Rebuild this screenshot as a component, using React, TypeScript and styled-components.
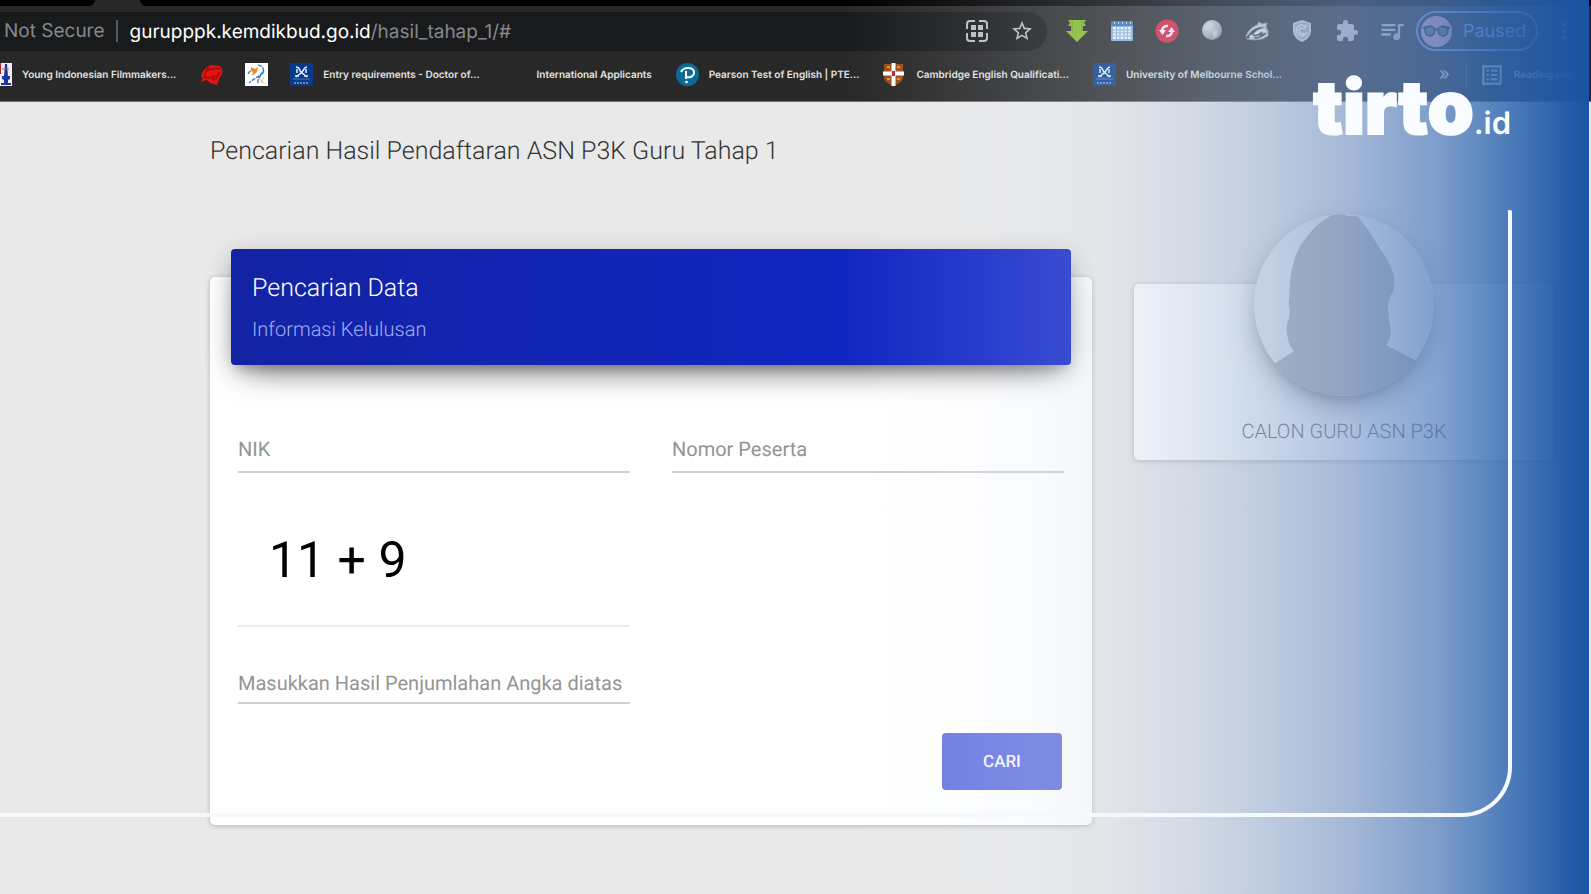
import React from "react";
import styled, { createGlobalStyle, css } from "styled-components";
import {
  MdExtension,
  MdMoreVert,
  MdOutlineListAlt,
  MdQueueMusic,
  MdStarBorder,
} from "react-icons/md";

const GlobalStyle = createGlobalStyle`
  *, *::before, *::after { box-sizing: border-box; }
  body {
    margin: 0;
    background: #e9e9e9;
    font-family: Roboto, "Liberation Sans", sans-serif;
    text-rendering: geometricPrecision;
  }
  button, input { font: inherit; text-rendering: inherit; }
  svg { flex: none; }
`;

const plainButton = css`
  display: flex;
  align-items: center;
  justify-content: center;
  padding: 0;
  border: 0;
  background: none;
  color: inherit;
  cursor: pointer;
`;

const Screen = styled.div`
  position: relative;
  min-height: 100vh;
  overflow: hidden;
`;

/* ---------- browser chrome ---------- */

const Chrome = styled.header`
  background: #282828;
  border-bottom: 1px solid #6f6f6f;
  font-family: Inter, "Liberation Sans", sans-serif;
`;

const TabStrip = styled.div`
  display: flex;
  height: 6px;
  background: #282828;
`;

const TabShade = styled.div<{ $grow?: boolean }>`
  flex: ${(p) => (p.$grow ? "1" : "0 0 95px")};
  margin-left: ${(p) => (p.$grow ? "45px" : "0")};
  background: #000;
  border-radius: ${(p) => (p.$grow ? "0 0 0 6px" : "0 0 6px 0")};
`;

const Toolbar = styled.div`
  display: flex;
  align-items: center;
  height: 50px;
  padding: 0 15px 0 0;
`;

const Omnibox = styled.div`
  flex: 1;
  display: flex;
  align-items: center;
  height: 39px;
  padding: 0 13px 0 4px;
  background: #191a1c;
  border-radius: 0 20px 20px 0;
  color: #86898c;
  font-size: 19px;
`;

const Security = styled.button`
  ${plainButton}
  padding-right: 11px;
  border-right: 2px solid #55585b;
  line-height: 22px;
`;

const Address = styled.div`
  flex: 1;
  padding-left: 12px;
  white-space: nowrap;
`;

const Host = styled.span`
  color: #fff;
`;

const OmniActions = styled.div`
  display: flex;
  gap: 21px;
  color: #b9bbbd;
`;

const Extensions = styled.div`
  display: flex;
  gap: 21px;
  margin: 0 12px 0 18px;
  color: #c9cbce;
`;

const IconButton = styled.button`
  ${plainButton}
  width: 24px;
  height: 24px;
`;

const Profile = styled.button`
  ${plainButton}
  justify-content: flex-start;
  gap: 11px;
  width: 122px;
  height: 40px;
  margin-right: 14px;
  padding-left: 3px;
  border: 2px solid #6f9be6;
  border-radius: 20px;
  color: #8fb2f0;
  font-size: 18px;
`;

const Bookmarks = styled.nav`
  display: flex;
  align-items: center;
  gap: 22px;
  height: 45px;
  padding-bottom: 8px;
  overflow: hidden;
  color: #e4e4e4;
  font-size: 10px;
  font-weight: 600;
`;

const Bookmark = styled.a<{ $cut?: boolean }>`
  display: flex;
  align-items: center;
  flex: none;
  gap: 10px;
  margin-left: ${(p) => (p.$cut ? "-11px" : "0")};
  color: inherit;
  text-decoration: none;
  white-space: nowrap;
`;

const BookmarkLabel = styled.span`
  padding-right: 2px;
`;

const IconSlot = styled.span`
  display: flex;
  width: 23px;
  height: 23px;
`;

const BookmarkEnd = styled.div`
  display: flex;
  align-items: center;
  gap: 16px;
  margin-left: auto;
  padding-right: 18px;
`;

const More = styled.button`
  ${plainButton}
  font-size: 18px;
  font-weight: 500;
  line-height: 20px;
`;

const ReadingList = styled.button`
  ${plainButton}
  gap: 9px;
  padding-left: 12px;
  border-left: 1px solid #5a6f93;
  height: 24px;
`;

/* ---------- page ---------- */

const Main = styled.main`
  padding: 34px 37px 68px 210px;
`;

const PageTitle = styled.h1`
  margin: 0 0 109px;
  color: #333;
  font-size: 25px;
  font-weight: 300;
  line-height: 32px;
`;

const Columns = styled.div`
  display: grid;
  grid-template-columns: 21fr 10fr;
  gap: 42px;
  align-items: start;
`;

const Card = styled.section`
  background: #fff;
  border-radius: 5px;
  box-shadow: 0 1px 5px rgba(0, 0, 0, 0.24);
`;

const CardHeader = styled.header`
  position: relative;
  top: -28px;
  margin: 0 21px -28px;
  padding: 24px 21px;
  border-radius: 4px;
  background: linear-gradient(90deg, #1323a4, #1127cc);
  box-shadow: 0 16px 34px -14px rgba(0, 0, 0, 0.56), 0 5px 26px rgba(0, 0, 0, 0.16),
    0 8px 12px -5px rgba(0, 0, 0, 0.22);
  color: #fff;
`;

const CardTitle = styled.h2`
  margin: 0 0 12px;
  font-size: 25px;
  font-weight: 300;
  line-height: 32px;
`;

const CardSubtitle = styled.p`
  margin: 0;
  color: #a3adf5;
  font-size: 20px;
  font-weight: 300;
  line-height: 24px;
`;

const Form = styled.form`
  display: grid;
  grid-template-columns: 1fr 1fr;
  column-gap: 42px;
  padding: 72px 28px 35px;
`;

const Field = styled.div<{ $compact?: boolean }>`
  display: grid;
  grid-column: ${(p) => (p.$compact ? "1" : "auto")};
  height: ${(p) => (p.$compact ? "33px" : "36px")};
`;

const FieldLabel = styled.label`
  grid-area: 1 / 1;
  color: #949494;
  font-size: 20px;
  line-height: 24px;
  white-space: nowrap;
`;

const FieldInput = styled.input`
  grid-area: 1 / 1;
  width: 100%;
  padding: 0;
  border: 0;
  border-bottom: 2px solid #d0d0d0;
  outline: 0;
  background: transparent;
  color: #333;
  font-size: 20px;
`;

const Sum = styled.output`
  grid-column: 1;
  margin: 58px 0 44px;
  padding: 0 0 34px 31px;
  border-bottom: 2px solid #eee;
  color: #000;
  font-size: 50px;
  line-height: 60px;
`;

const Actions = styled.div`
  grid-column: 1 / -1;
  display: flex;
  justify-content: flex-end;
  padding: 29px 2px 0;
`;

const SubmitButton = styled.button`
  width: 120px;
  height: 57px;
  border: 0;
  border-radius: 4px;
  background: #6b78e0;
  color: #f4f5ff;
  font-size: 17px;
  font-weight: 500;
  cursor: pointer;
`;

const ProfileCard = styled(Card)`
  display: flex;
  flex-direction: column;
  align-items: center;
  margin-top: 7px;
  padding-bottom: 16px;
`;

const Avatar = styled.div`
  width: 180px;
  height: 182px;
  margin: -70px 0 22px;
  border-radius: 50%;
  overflow: hidden;
  background: #f2f2f2;
  box-shadow: 0 16px 34px -12px rgba(0, 0, 0, 0.5), 0 4px 25px rgba(0, 0, 0, 0.12),
    0 8px 10px -5px rgba(0, 0, 0, 0.16);
`;

const ProfileName = styled.p`
  margin: 0;
  color: #666;
  font-size: 20px;
  font-weight: 300;
  line-height: 26px;
`;

/* ---------- branding laid over the page ---------- */

const BlueFade = styled.div`
  position: absolute;
  inset: 0 2px 0 0;
  pointer-events: none;
  background: linear-gradient(
    90deg,
    rgba(240, 246, 252, 0) 53%,
    rgba(236, 242, 250, 0.07) 59%,
    rgba(222, 230, 242, 0.16) 65%,
    rgba(200, 213, 232, 0.26) 70.5%,
    rgba(170, 191, 221, 0.37) 75%,
    rgba(143, 171, 212, 0.49) 80%,
    rgba(120, 152, 205, 0.61) 85%,
    rgba(84, 128, 191, 0.72) 90.5%,
    rgba(50, 106, 179, 0.83) 94.5%,
    rgba(34, 90, 167, 0.94) 98%,
    rgb(24, 84, 163) 100%
  );
`;

const FrameLine = styled.div`
  position: absolute;
  inset: 210px 79px 77px 0;
  pointer-events: none;
  border: solid #f5f9fd;
  border-width: 0 4px 4px 0;
  border-radius: 0 2px 50px 0;
`;

const Brand = styled.a`
  position: absolute;
  top: 82px;
  right: 80px;
  display: flex;
  align-items: baseline;
  color: #fafdff;
  font-family: Inter, Roboto, sans-serif;
  font-size: 74px;
  font-weight: 900;
  line-height: 50px;
  text-decoration: none;
  -webkit-text-stroke: 2px #fafdff;
`;

const BrandSuffix = styled.span`
  font-size: 31px;
  font-weight: 600;
  -webkit-text-stroke-width: 0;
`;

/* ---------- drawings ---------- */

const QrIcon = () => (
  <svg width="22" height="22" viewBox="0 0 22 22" fill="none" stroke="currentColor" strokeWidth="2">
    <path d="M1 9V4a3 3 0 0 1 3-3h5M13 1h5a3 3 0 0 1 3 3v5M21 13v5a3 3 0 0 1-3 3h-5M9 21H4a3 3 0 0 1-3-3v-5" />
    <path d="M5 5h5v5H5zM12 5h5v5h-5zM5 12h5v5H5zM12 12h5v5h-5z" fill="currentColor" stroke="none" />
  </svg>
);

const DownloadIcon = () => (
  <svg width="24" height="24" viewBox="0 0 24 24">
    <path d="M3 1h18l-2 3 2 3h-3v5h5L12 23 1 12h5V7H3l2-3z" fill="#84bd25" />
    <path d="M7 2v10M17 2v10" stroke="#5f9415" strokeWidth="1" />
  </svg>
);

const CalendarIcon = () => (
  <svg width="24" height="24" viewBox="0 0 24 24">
    <rect x="1" y="2" width="22" height="20" rx="1" fill="#7fb0e2" />
    <path d="M1 2h22v5H1z" fill="#2f73b8" />
    <path d="M4 4h1M8 4h1M12 4h1M16 4h1M20 4h1" stroke="#cfe3f7" strokeWidth="2" />
    <path d="M3 8h18v12H3z" fill="#eef5fc" />
    <path d="M3 11h18M3 14h18M3 17h18M6.500 8v12M10 8v12M14 8v12M17.500 8v12" stroke="#7fb0e2" />
  </svg>
);

const SyncIcon = () => (
  <svg width="24" height="24" viewBox="0 0 24 24">
    <circle cx="12" cy="12" r="11.500" fill="#e31a35" />
    <g fill="none" stroke="#fff" strokeWidth="2.500">
      <path d="M7 12a5 5 0 0 1 6-5" />
      <path d="M17 12a5 5 0 0 1-6 5" />
    </g>
    <path d="M4 11h7l-3.500 5zM20 13h-7l3.500-5z" fill="#fff" />
  </svg>
);

const GlobeIcon = () => (
  <svg width="24" height="24" viewBox="0 0 24 24">
    <defs>
      <radialGradient id="orb" cx="0.35" cy="0.3" r="0.8">
        <stop offset="0" stopColor="#eee" />
        <stop offset="1" stopColor="#898989" />
      </radialGradient>
    </defs>
    <circle cx="12" cy="11" r="10" fill="url(#orb)" />
    <path d="M5 6l5-3 4 2-4 4-3 3-3-2zM13 11l5 1-1 5-4 2z" fill="#dedede" opacity="0.7" />
  </svg>
);

const BadgerIcon = () => (
  <svg width="24" height="24" viewBox="0 0 24 24">
    <path d="M1 17C3 12 7 8 12 6l2-3 3 2 5-1-1 4 2 4v5l-6 3-8 1-7-1z" fill="#dcdcdc" stroke="#a39080" />
    <path d="M3 17c2-5 7-8 13-9l4 1c-6 0-10 3-13 8z" fill="#2c2c2c" />
    <path d="M5 17c3-1 5-1 7-3s5-3 8-2" stroke="#fff" strokeWidth="1.500" fill="none" />
    <path d="M9 19c5 0 8-1 12-5M8 16c3 1 7 0 9-3M15 16l4-1" stroke="#333" strokeWidth="1.500" fill="none" />
    <circle cx="3" cy="18" r="1.500" fill="#222" />
  </svg>
);

const ShieldIcon = () => (
  <svg width="24" height="24" viewBox="0 0 24 24">
    <path d="M12 1l9 3v8c0 6-5 9-9 11-4-2-9-5-9-11V4z" fill="#d8d8d8" />
    <path d="M12 3l7 2v7c0 4-4 7-7 9-3-2-7-5-7-9V5z" fill="#a9adb3" />
    <path d="M16 8a5.500 5.500 0 1 0 1 5M14 10a3 3 0 1 0 0 4M17 6l-3 4" fill="none" stroke="#f2f2f2" strokeWidth="1.500" />
  </svg>
);

const GlassesAvatar = () => (
  <svg width="31" height="31" viewBox="0 0 31 31">
    <circle cx="15.500" cy="15.500" r="15.500" fill="#e3a5cf" />
    <g stroke="#222" strokeWidth="1.500">
      <circle cx="9" cy="15" r="5" fill="#6e6e7c" />
      <circle cx="22" cy="15" r="5" fill="#6e6e7c" />
      <path d="M14 14q1.500-2 3 0M4 13l-2-2M27 13l2-2M3 11h6M22 11h6" fill="none" />
    </g>
  </svg>
);

const MonumentIcon = () => (
  <svg width="23" height="23" viewBox="0 0 23 23">
    <path d="M0 0h23v23H0z" fill="#fff" />
    <path d="M0 0h13v11H0z" fill="#b3272d" />
    <path d="M12 0h11v23H12z" fill="#f1edf2" />
    <path d="M16 1h2l1 12h2v3l-2 1v3h3v2H12v-2h3v-3l-2-1v-3h2z" fill="#1d35a6" />
    <path d="M13 6h7" stroke="#c7564f" />
  </svg>
);

const RedBirdIcon = () => (
  <svg width="23" height="23" viewBox="0 0 23 23">
    <path d="M1 14C2 8 6 3 12 2l8 1c2 2 3 5 2 8l-3 5-2 6-7-2-3-3-6 2 2-4z" fill="#e31313" />
    <path d="M6 8c4-2 9-3 14-2M3 14c4 1 8 1 12-1M12 17l4-2 4-6M9 4c-3 3-4 6-4 9" stroke="#9a0b0b" strokeWidth="1.500" fill="none" />
  </svg>
);

const StarMapIcon = () => (
  <svg width="23" height="23" viewBox="0 0 23 23">
    <path d="M0 0h23v23H0z" fill="#fff" />
    <path d="M6 4l4 2 3-2-1 5-5 4 1-4-2-1z" fill="#ef8a18" />
    <path d="M13 2c5 1 7 5 4 8-3 4-9 6-13 10M3 11c1-2 2-3 3-3M19 8c-3 5-7 7-6 12" stroke="#477fc6" strokeWidth="1.500" fill="none" strokeDasharray="4 1" />
    <path d="M13 15l7 6M16 20l3-6" stroke="#efbd73" />
  </svg>
);

const CrestIcon = () => (
  <svg width="23" height="23" viewBox="0 0 23 23">
    <path d="M0 0h23v23H0z" fill="#08398a" />
    <path d="M6 4c4 0 3 3 5 5s4 3 6 5M17 4c-3 0-3 3-5 5s-4 3-6 5M7 6v4M16 6v4M5 13h4M14 13h4" stroke="#e8f0ff" strokeWidth="1.500" fill="none" />
    <path d="M3 16h17" stroke="#4d75bb" />
    <path d="M4 20h15" stroke="#c9d8f2" strokeDasharray="2 1" />
  </svg>
);

const PearsonIcon = () => (
  <svg width="23" height="23" viewBox="0 0 23 23">
    <circle cx="11.500" cy="11.500" r="11.500" fill="#0a6b99" />
    <path d="M5 9c3-6 14-5 13 1 0 3-4 5-7 4M10 8v8" stroke="#fff" strokeWidth="2" fill="none" />
    <circle cx="10.500" cy="19" r="1.300" fill="#fff" />
  </svg>
);

const ShieldCrossIcon = () => (
  <svg width="21" height="23" viewBox="0 0 21 23">
    <path d="M1 1h19v13c0 5-5 7-9.500 9C6 21 1 19 1 14z" fill="#9c4a17" />
    <path d="M4 4h3M14 4h3M4 16h3M14 16h3" stroke="#d5962b" strokeWidth="2" />
    <path d="M10.500 0v23M0 10.500h21" stroke="#fff" strokeWidth="4" />
    <path d="M10.500 8v5" stroke="#b12424" strokeWidth="3" />
  </svg>
);

const Silhouette = () => (
  <svg width="180" height="182" viewBox="0 0 180 182">
    <path
      fill="#b2b2b2"
      d="M76 2Q86-2 94 2Q102 1 106 5Q116 17 123 30L133 45Q138 54 140 63Q141 71 139 78Q134 85 134 93Q134 105 137 117Q136 126 132 131L163 147V182H14V153L20 150L40 137Q35 132 34 125Q32 117 33 110Q36 103 36 95Q34 91 35 87L36 67Q37 56 40 47Q44 33 51 25Q61 11 76 2Z"
    />
  </svg>
);

const extensions = [
  { name: "Download", icon: <DownloadIcon /> },
  { name: "Calendar", icon: <CalendarIcon /> },
  { name: "Sync", icon: <SyncIcon /> },
  { name: "Globe", icon: <GlobeIcon /> },
  { name: "Badger", icon: <BadgerIcon /> },
  { name: "Shield", icon: <ShieldIcon /> },
  { name: "Extensions", icon: <MdExtension size={24} /> },
  { name: "Media", icon: <MdQueueMusic size={28} /> },
];

const bookmarks = [
  { id: "film", label: "Young Indonesian Filmmakers...", icon: <MonumentIcon />, cut: true },
  { id: "bird", label: "", icon: <RedBirdIcon /> },
  { id: "map", label: "", icon: <StarMapIcon /> },
  { id: "doctor", label: "Entry requirements - Doctor of...", icon: <CrestIcon /> },
  { id: "intl", label: "International Applicants", icon: null },
  { id: "pte", label: "Pearson Test of English | PTE...", icon: <PearsonIcon /> },
  { id: "camb", label: "Cambridge English Qualificati...", icon: <ShieldCrossIcon /> },
  { id: "melb", label: "University of Melbourne Schol...", icon: <CrestIcon /> },
];

export default function App() {
  return (
    <Screen>
      <GlobalStyle />
      <Chrome>
        <TabStrip>
          <TabShade />
          <TabShade $grow />
        </TabStrip>
        <Toolbar>
          <Omnibox>
            <Security type="button">Not Secure</Security>
            <Address>
              <Host>gurupppk.kemdikbud.go.id</Host>/hasil_tahap_1/#
            </Address>
            <OmniActions>
              <IconButton type="button" aria-label="QR code"><QrIcon /></IconButton>
              <IconButton type="button" aria-label="Bookmark"><MdStarBorder size={24} /></IconButton>
            </OmniActions>
          </Omnibox>
          <Extensions>
            {extensions.map((e) => (
              <IconButton type="button" key={e.name} aria-label={e.name}>{e.icon}</IconButton>
            ))}
          </Extensions>
          <Profile type="button"><GlassesAvatar />Paused</Profile>
          <IconButton type="button" aria-label="Menu"><MdMoreVert size={26} color="#c9cbce" /></IconButton>
        </Toolbar>
        <Bookmarks>
          {bookmarks.map((b) => (
            <Bookmark href="#" key={b.id} $cut={b.cut} aria-label={b.label || b.id}>
              <IconSlot>{b.icon}</IconSlot>
              {b.label && <BookmarkLabel>{b.label}</BookmarkLabel>}
            </Bookmark>
          ))}
          <BookmarkEnd>
            <More type="button" aria-label="More bookmarks">»</More>
            <ReadingList type="button"><MdOutlineListAlt size={26} />Reading List</ReadingList>
          </BookmarkEnd>
        </Bookmarks>
      </Chrome>

      <Main>
        <PageTitle>Pencarian Hasil Pendaftaran ASN P3K Guru Tahap 1</PageTitle>
        <Columns>
          <Card>
            <CardHeader>
              <CardTitle>Pencarian Data</CardTitle>
              <CardSubtitle>Informasi Kelulusan</CardSubtitle>
            </CardHeader>
            <Form onSubmit={(e) => e.preventDefault()}>
              <Field>
                <FieldLabel htmlFor="nik">NIK</FieldLabel>
                <FieldInput id="nik" />
              </Field>
              <Field>
                <FieldLabel htmlFor="peserta">Nomor Peserta</FieldLabel>
                <FieldInput id="peserta" />
              </Field>
              <Sum>11 + 9</Sum>
              <Field $compact>
                <FieldLabel htmlFor="hasil">Masukkan Hasil Penjumlahan Angka diatas</FieldLabel>
                <FieldInput id="hasil" />
              </Field>
              <Actions>
                <SubmitButton type="submit">CARI</SubmitButton>
              </Actions>
            </Form>
          </Card>
          <ProfileCard>
            <Avatar><Silhouette /></Avatar>
            <ProfileName>CALON GURU ASN P3K</ProfileName>
          </ProfileCard>
        </Columns>
      </Main>

      <BlueFade />
      <FrameLine />
      <Brand href="#">tirto<BrandSuffix>.id</BrandSuffix></Brand>
    </Screen>
  );
}
